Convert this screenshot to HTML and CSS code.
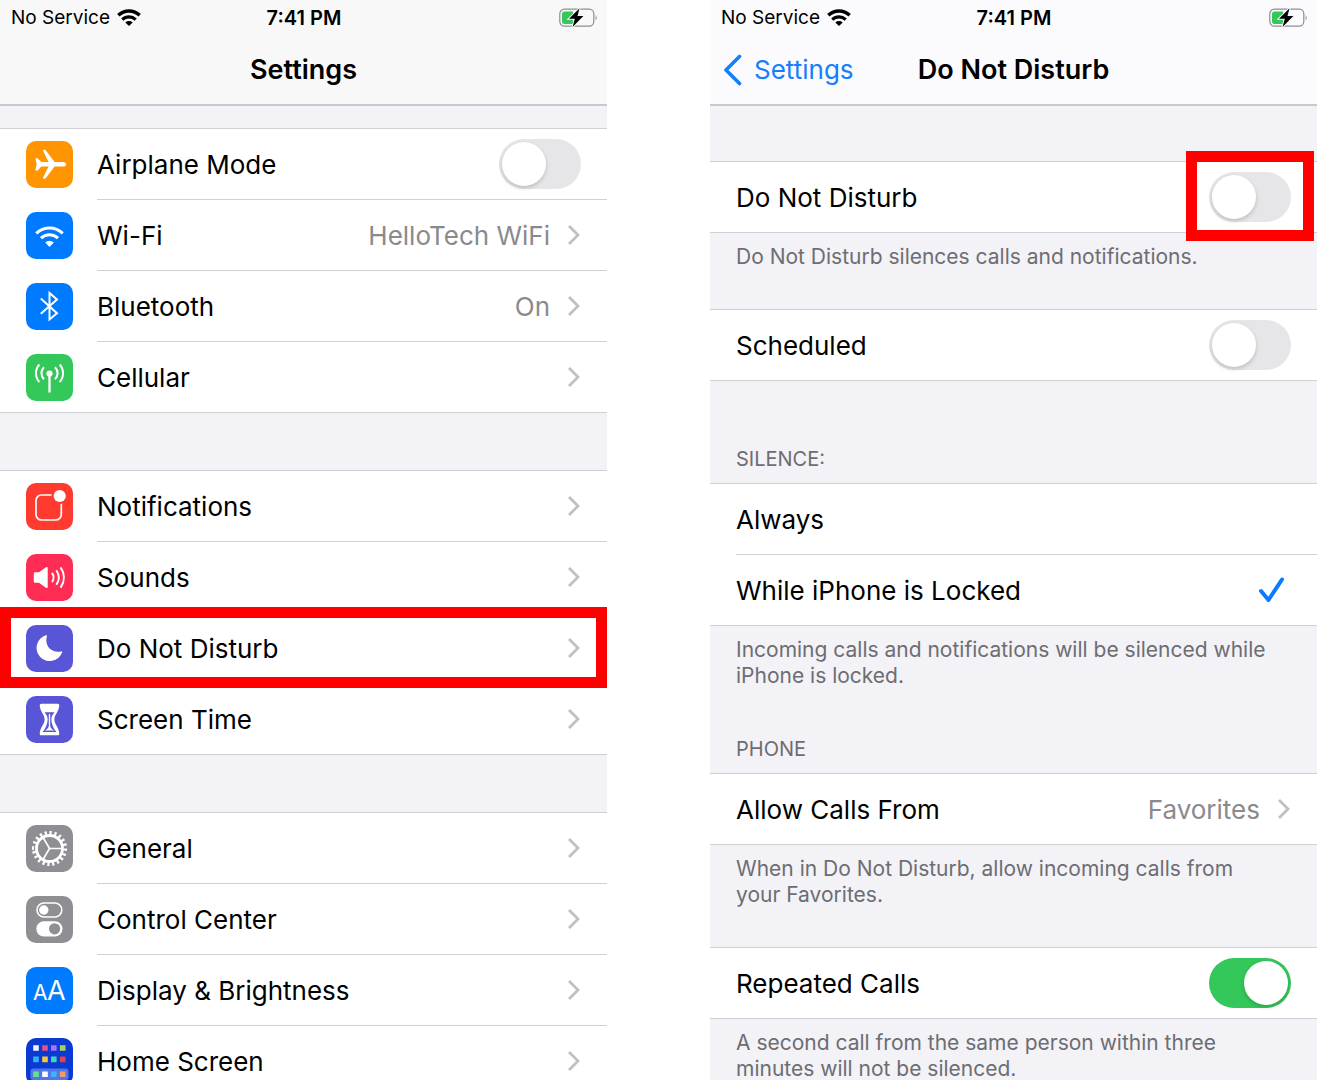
FILE: index.html
```html
<!DOCTYPE html>
<html lang="en">

<head>
  <meta charset="UTF-8" />
  <meta name="viewport" content="width=device-width, initial-scale=1.0" />
  <title>Do Not Disturb</title>
  <link rel="stylesheet" href="styles.css">
</head>

<body>
  <!-- shared shapes -->
  <svg class="defs" aria-hidden="true">
    <symbol id="chevron" viewBox="0 0 13 22">
      <path d="M1 2l9 9-9 9" fill="none" stroke="currentColor" stroke-width="2.8" />
    </symbol>
    <symbol id="wifi" viewBox="0 0 24 17">
      <path d="M1.3 6.3a15.4 15.4 0 0 1 21.4 0" fill="none" stroke="currentColor" stroke-width="3.4" />
      <path d="M5.3 10.6a9.7 9.7 0 0 1 13.4 0" fill="none" stroke="currentColor" stroke-width="3.1" />
      <path d="M8.3 13.5a5.4 5.4 0 0 1 7.4 0L12 17z" fill="currentColor" />
    </symbol>
    <symbol id="battery" viewBox="0 0 38 20">
      <rect x=".8" y="1.2" width="34" height="17" rx="4.6" fill="none" stroke="#8e8e90" stroke-width="1.2" />
      <path d="M36.6 7.2v5c1.4-.5 1.4-4.5 0-5z" fill="#8e8e90" />
      <path d="M5.6 3.5H14v12.4H5.6A2.6 2.6 0 0 1 3 13.3V6.1a2.6 2.6 0 0 1 2.6-2.6z" fill="#34c759" />
      <path d="M20.5.3L10 10.700h5.800L13.600 18.900 24.400 8.100h-5.900z" fill="#000" stroke="#f9f9f9" stroke-width="2" paint-order="stroke" />
    </symbol>
  </svg>

  <main class="screens">
    <section class="screen">
      <header class="top_bar">
        <div class="status">
          <span class="carrier">No Service <svg class="wifi"><use href="#wifi" /></svg></span>
          <span class="time">7:41 PM</span>
          <svg class="battery"><use href="#battery" /></svg>
        </div>
        <div class="nav">
          <h1>Settings</h1>
        </div>
      </header>

      <div class="content content_scrolled">
        <div class="group">
          <div class="row">
            <svg class="icon orange" viewBox="0 0 47 47">
              <path d="M9.500 17.200h2.100l3.800 3.900h7.200L17.100 10q-.4-1.200.9-1.200h1.300L28.600 21h8.100c4.600 0 4.600 4.600 0 4.600h-8.100L19.300 37.800H18q-1.300 0-.9-1.200l5.500-11.100h-7.200l-3.800 3.900H9.500l1.100-6.100z" fill="#fff" />
            </svg>
            <label class="cell">
              <span class="name">Airplane Mode</span>
              <input class="toggle" type="checkbox">
            </label>
          </div>
          <a class="row" href="#wifi-settings">
            <svg class="icon blue" viewBox="0 0 47 47">
              <g fill="none" stroke="#fff" stroke-width="3.1">
                <path d="M10.300 21.300a19 19 0 0 1 26.400 0" />
                <path d="M15 26.200a12.300 12.300 0 0 1 17 0" />
              </g>
              <path d="M19.200 30.500a6.400 6.400 0 0 1 8.600 0l-4.300 4.400z" fill="#fff" />
            </svg>
            <span class="cell">
              <span class="name">Wi-Fi</span>
              <span class="value">HelloTech WiFi</span>
              <svg class="chevron"><use href="#chevron" /></svg>
            </span>
          </a>
          <a class="row" href="#bluetooth">
            <svg class="icon blue" viewBox="0 0 47 47">
              <path d="M14.800 15.500L31 30.200l-7.500 6.200V10l7.500 6.400-16.200 14.400" fill="none" stroke="#fff" stroke-width="2" />
            </svg>
            <span class="cell">
              <span class="name">Bluetooth</span>
              <span class="value">On</span>
              <svg class="chevron"><use href="#chevron" /></svg>
            </span>
          </a>
          <a class="row" href="#cellular">
            <svg class="icon green" viewBox="0 0 47 47">
              <circle cx="23.500" cy="19.500" r="3.100" fill="#fff" />
              <g fill="none" stroke="#fff" stroke-width="2">
                <path d="M23.500 19.500v19" stroke-width="2.300" />
                <path d="M13.400 10.500a13 13 0 0 0 0 17.600M33.600 10.500a13 13 0 0 1 0 17.600" />
                <path d="M18 13.300a8.300 8.300 0 0 0 0 12M29 13.300a8.300 8.300 0 0 1 0 12" />
              </g>
            </svg>
            <span class="cell">
              <span class="name">Cellular</span>
              <svg class="chevron"><use href="#chevron" /></svg>
            </span>
          </a>
        </div>

        <div class="group">
          <a class="row" href="#notifications">
            <svg class="icon red" viewBox="0 0 47 47">
              <rect x="10" y="12" width="25.300" height="25" rx="5.500" fill="none" stroke="#fff" stroke-width="1.700" />
              <circle cx="33.700" cy="13" r="8.300" fill="#ff3b30" />
              <circle cx="33.700" cy="13" r="6.100" fill="#fff" />
            </svg>
            <span class="cell">
              <span class="name">Notifications</span>
              <svg class="chevron"><use href="#chevron" /></svg>
            </span>
          </a>
          <a class="row" href="#sounds">
            <svg class="icon pink" viewBox="0 0 47 47">
              <path d="M7.800 19.600q0-1.300 1.300-1.300H13l7-5q1.700-1 1.700.8v18.800q0 1.800-1.700.8l-7-5H9.100q-1.300 0-1.300-1.300z" fill="#fff" />
              <g fill="none" stroke="#fff" stroke-width="1.900">
                <path d="M26 18.900q3.200 4.600 0 9.200" />
                <path d="M30.300 16.200q5 7.300 0 14.600" />
                <path d="M34.600 13.400q6.800 10.100 0 20.200" />
              </g>
            </svg>
            <span class="cell">
              <span class="name">Sounds</span>
              <svg class="chevron"><use href="#chevron" /></svg>
            </span>
          </a>
          <a class="row highlight" href="#do-not-disturb">
            <svg class="icon purple" viewBox="0 0 47 47">
              <path d="M19.800 10.300c.8-.4 1.400 0 1.100.9-2.700 9.500 4.300 17.300 14.300 15.200.9-.2 1.300.4.900 1.200A13.200 13.200 0 1 1 19.800 10.300z" fill="#fff" />
            </svg>
            <span class="cell">
              <span class="name">Do Not Disturb</span>
              <svg class="chevron"><use href="#chevron" /></svg>
            </span>
          </a>
          <a class="row" href="#screen-time">
            <svg class="icon purple" viewBox="0 0 47 47">
              <path d="M15.500 7.700h16q2.200 0 1.700 2.600c-.8 6-4.800 8.600-4.800 13.200s4 7.200 4.800 13.200q.5 2.600-1.700 2.600h-16q-2.200 0-1.700-2.600c.8-6 4.800-8.600 4.800-13.200s-4-7.200-4.800-13.200q-.5-2.600 1.700-2.600z" fill="#fff" />
              <path d="M18.500 16.200h10q-3 3-3.200 7.300.5 7 5 12.500H16.700q4.500-5.500 5-12.500-.2-4.300-3.200-7.300z" fill="#5856d6" />
              <path d="M22.800 18h1.400v12q.3 2.900 4.300 4.600h-10q4-1.700 4.300-4.600z" fill="#fff" />
            </svg>
            <span class="cell">
              <span class="name">Screen Time</span>
              <svg class="chevron"><use href="#chevron" /></svg>
            </span>
          </a>
        </div>

        <div class="group">
          <a class="row" href="#general">
            <svg class="icon gray" viewBox="0 0 47 47">
              <g fill="none" stroke="#fff">
                <circle cx="23.500" cy="23.500" r="13" stroke-width="2.800" />
                <circle cx="23.500" cy="23.500" r="15.600" stroke-width="4" pathLength="40" stroke-dasharray=".9 1.100" />
                <path d="M36 23.500H23.500L17.200 12.700M23.500 23.500l-6.300 10.800" stroke-width="1.700" />
              </g>
            </svg>
            <span class="cell">
              <span class="name">General</span>
              <svg class="chevron"><use href="#chevron" /></svg>
            </span>
          </a>
          <a class="row" href="#control-center">
            <svg class="icon gray" viewBox="0 0 47 47">
              <rect x="11" y="7" width="24.800" height="14" rx="7" fill="none" stroke="#fff" stroke-width="1.600" />
              <circle cx="17.800" cy="14" r="4.700" fill="#fff" />
              <rect x="10.300" y="25.200" width="26.200" height="15.200" rx="7.600" fill="#fff" />
              <circle cx="28.600" cy="32.800" r="5.600" fill="#8e8e93" />
            </svg>
            <span class="cell">
              <span class="name">Control Center</span>
              <svg class="chevron"><use href="#chevron" /></svg>
            </span>
          </a>
          <a class="row" href="#display">
            <svg class="icon blue" viewBox="0 0 47 47" fill="#fff">
              <text x="7" y="33" font-size="21">A</text>
              <text x="21" y="33" font-size="27">A</text>
            </svg>
            <span class="cell">
              <span class="name">Display &amp; Brightness</span>
              <svg class="chevron"><use href="#chevron" /></svg>
            </span>
          </a>
          <a class="row" href="#home-screen">
            <svg class="icon navy" viewBox="0 0 47 47">
              <rect x="4.500" y="30.500" width="38" height="11.500" rx="3" fill="#4f78e6" />
              <g stroke-width="5.600">
                <path d="M7.200 10h5.600" stroke="#f4f0ff" />
                <path d="M16.200 10h5.600" stroke="#e8507f" />
                <path d="M25 10h5.600" stroke="#b070ff" />
                <path d="M33.900 10h5.600" stroke="#a4d65e" />
                <path d="M7.200 21.400h5.600" stroke="#2fb4f5" />
                <path d="M16.200 21.400h5.600" stroke="#fcc62d" />
                <path d="M25 21.400h5.600" stroke="#46d3c4" />
                <path d="M33.900 21.400h5.600" stroke="#e8404f" />
                <path d="M7.200 36.300h5.600" stroke="#6be08a" />
                <path d="M16.200 36.300h5.600" stroke="#fff" />
                <path d="M25 36.300h5.600" stroke="#3cb4f5" />
                <path d="M33.900 36.300h5.600" stroke="#f59a62" />
              </g>
            </svg>
            <span class="cell">
              <span class="name">Home Screen</span>
              <svg class="chevron"><use href="#chevron" /></svg>
            </span>
          </a>
        </div>
      </div>
    </section>

    <section class="screen">
      <header class="top_bar top_bar_light">
        <div class="status">
          <span class="carrier">No Service <svg class="wifi"><use href="#wifi" /></svg></span>
          <span class="time">7:41 PM</span>
          <svg class="battery"><use href="#battery" /></svg>
        </div>
        <div class="nav">
          <a class="back" href="#settings">
            <svg viewBox="0 0 20 32">
              <path d="M16.500 2.500L3 16l13.500 13.500" fill="none" stroke="currentColor" stroke-width="3.600" stroke-linecap="round" stroke-linejoin="round" />
            </svg>
            Settings
          </a>
          <h1>Do Not Disturb</h1>
        </div>
      </header>

      <div class="content">
        <div class="group">
          <label class="row">
            <span class="cell">
              <span class="name">Do Not Disturb</span>
              <span class="toggle_highlight"><input class="toggle" type="checkbox"></span>
            </span>
          </label>
        </div>
        <p class="note">Do Not Disturb silences calls and notifications.</p>

        <div class="group">
          <label class="row">
            <span class="cell">
              <span class="name">Scheduled</span>
              <input class="toggle" type="checkbox">
            </span>
          </label>
        </div>

        <h2>SILENCE:</h2>
        <div class="group">
          <label class="row">
            <span class="cell">
              <span class="name">Always</span>
              <input class="option" type="radio" name="silence">
              <svg class="check" viewBox="0 0 26 26"><path d="M2 14l7.500 9L23 2.500" /></svg>
            </span>
          </label>
          <label class="row">
            <span class="cell">
              <span class="name">While iPhone is Locked</span>
              <input class="option" type="radio" name="silence" checked>
              <svg class="check" viewBox="0 0 26 26"><path d="M2 14l7.500 9L23 2.500" /></svg>
            </span>
          </label>
        </div>
        <p class="note">Incoming calls and notifications will be silenced while iPhone is locked.</p>

        <h2>PHONE</h2>
        <div class="group">
          <a class="row" href="#allow-calls">
            <span class="cell">
              <span class="name">Allow Calls From</span>
              <span class="value">Favorites</span>
              <svg class="chevron"><use href="#chevron" /></svg>
            </span>
          </a>
        </div>
        <p class="note">When in Do Not Disturb, allow incoming calls from your Favorites.</p>

        <div class="group">
          <label class="row">
            <span class="cell">
              <span class="name">Repeated Calls</span>
              <input class="toggle" type="checkbox" checked>
            </span>
          </label>
        </div>
        <p class="note">A second call from the same person within three minutes will not be silenced.</p>
      </div>
    </section>
  </main>
</body>

</html>
```
FILE: styles.css
```css
* {
  box-sizing: border-box;
}

body {
  margin: 0;
  background: #fff;
  color: #000;
  font-family: Inter, "Liberation Sans", sans-serif;
  font-size: 26px;
}

h1,
h2,
p {
  margin: 0;
}

a {
  color: inherit;
  text-decoration: none;
}

.defs {
  display: none;
}

.screens {
  display: grid;
  grid-template-columns: 1fr 1fr;
  gap: 103px;
  height: 100vh;
  overflow: hidden;
}

.screen {
  background: #f2f2f7;
  overflow: hidden;
}

/* status and title */
.top_bar {
  background: #f8f8f9;
  border-bottom: 2px solid #c9c9cd;
}

.top_bar_light {
  background: #fbfbfd;
}

.status,
.nav {
  display: grid;
  grid-template-columns: 1fr auto 1fr;
  align-items: center;
}

.status {
  height: 35px;
  padding: 0 10px 0 11px;
  font-size: 19px;
}

.carrier {
  display: flex;
  align-items: center;
  gap: 7px;
}

.time {
  font-size: 20px;
  font-weight: 600;
}

.wifi {
  width: 24px;
  height: 17px;
}

.battery {
  width: 38px;
  height: 20px;
  justify-self: end;
}

.nav {
  height: 69px;
  padding: 0 13px;
}

.nav h1 {
  grid-column: 2;
  font-size: 27px;
  font-weight: 600;
}

.back {
  display: flex;
  align-items: center;
  gap: 11px;
  color: #157efb;
}

.back svg {
  width: 20px;
  height: 32px;
}

/* lists */
.content {
  padding-top: 55px;
}

.content_scrolled {
  padding-top: 22px;
}

.group {
  background: #fff;
  border-top: 1px solid #d0d0d4;
  margin-bottom: 57px;
}

.group:has(+ .note) {
  margin-bottom: 0;
}

.row {
  display: flex;
  align-items: center;
  gap: 24px;
  height: 71px;
  padding-left: 26px;
  position: relative;
}

.row:last-child {
  border-bottom: 1px solid #d0d0d4;
}

.cell {
  flex: 1;
  align-self: stretch;
  display: flex;
  align-items: center;
  gap: 18px;
  padding-right: 26px;
  border-bottom: 1px solid #d0d0d4;
}

.row:last-child .cell {
  border-bottom: none;
}

.name {
  flex: 1;
}

.value {
  color: #8a8a8e;
}

.chevron {
  width: 13px;
  height: 22px;
  color: #c0c0c4;
}

.note,
h2 {
  color: #6d6d72;
  font-size: 21px;
  font-weight: 400;
  line-height: 26px;
}

.note {
  padding: 11px 45px 39px 26px;
}

h2 {
  font-size: 20px;
  padding: 8px 26px 11px;
}

/* icon tiles */
.icon {
  width: 47px;
  height: 47px;
  border-radius: 10px;
}

.orange {
  background: #ff9500;
}

.blue {
  background: #007aff;
}

.green {
  background: #34c759;
}

.red {
  background: #ff3b30;
}

.pink {
  background: #ff2d55;
}

.purple {
  background: #5856d6;
}

.gray {
  background: #8e8e93;
}

.navy {
  background: #0a3ad2;
}

/* controls */
.toggle {
  appearance: none;
  display: block;
  width: 82px;
  height: 50px;
  margin: 0;
  padding: 3px;
  border-radius: 25px;
  background: #e6e6e9;
  cursor: pointer;
}

.toggle::before {
  content: "";
  display: block;
  width: 44px;
  height: 44px;
  border-radius: 50%;
  background: #fff;
  box-shadow: 0 2px 4px rgba(0, 0, 0, 0.18);
}

.toggle:checked {
  background: #34c759;
}

.toggle:checked::before {
  margin-left: auto;
}

.option {
  appearance: none;
  margin: 0;
}

.check {
  width: 26px;
  height: 26px;
  margin-right: 6px;
  fill: none;
  stroke: #0a7aff;
  stroke-width: 4;
  stroke-linecap: round;
  stroke-linejoin: round;
  visibility: hidden;
}

.option:checked + .check {
  visibility: visible;
}

/* red callout boxes */
.highlight::after,
.toggle_highlight::after {
  content: "";
  position: absolute;
  border: 11px solid #f00;
  pointer-events: none;
  z-index: 1;
}

.highlight::after {
  inset: -6px 0 -4px;
}

.toggle_highlight {
  position: relative;
}

.toggle_highlight::after {
  inset: -21px -23px -19px;
}
```
